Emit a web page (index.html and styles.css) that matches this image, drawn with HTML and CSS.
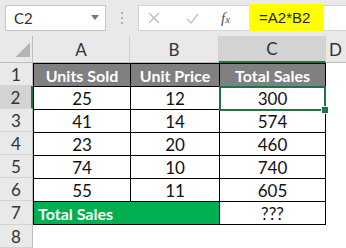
FILE: index.html
```html
<!DOCTYPE html>
<html lang="en">
<head>
  <meta charset="UTF-8">
  <meta name="viewport" content="width=device-width, initial-scale=1.0">
  <title>Total Sales</title>
  <link rel="stylesheet" href="styles.css">
</head>
<body>
  <div class="bar">
    <div class="namebox">
      <span>C2</span>
      <svg class="caret" width="8" height="5" viewBox="0 0 8 5"><path d="M0 0h8L4 5z" fill="#777"/></svg>
    </div>
    <div class="grip"><i></i><i></i><i></i></div>
    <div class="formula">
      <svg class="tool" width="12" height="12" viewBox="0 0 12 12"><path d="M1 1l10 10M11 1L1 11" stroke="#bbb" stroke-width="1.3"/></svg>
      <svg class="tool" width="13" height="11" viewBox="0 0 13 11"><path d="M1 6l4 4 7-9" stroke="#c4c4c4" stroke-width="1.4" fill="none"/></svg>
      <span class="fx">f<small>x</small></span>
      <span class="value">=A2*B2</span>
    </div>
  </div>

  <div class="sheet">
    <div class="hd corner"><b></b></div>
    <div class="hd col">A</div>
    <div class="hd col">B</div>
    <div class="hd col sel">C</div>
    <div class="hd col last">D</div>

    <div class="hd row">1</div>
    <div class="c top">Units Sold</div>
    <div class="c top">Unit Price</div>
    <div class="c top r">Total Sales</div>
    <div class="gap"></div>

    <div class="hd row sel">2</div>
    <div class="c">25</div>
    <div class="c">12</div>
    <div class="c r active">300</div>
    <div class="gap"></div>

    <div class="hd row">3</div>
    <div class="c">41</div>
    <div class="c">14</div>
    <div class="c r">574</div>
    <div class="gap"></div>

    <div class="hd row">4</div>
    <div class="c">23</div>
    <div class="c">20</div>
    <div class="c r">460</div>
    <div class="gap"></div>

    <div class="hd row">5</div>
    <div class="c">74</div>
    <div class="c">10</div>
    <div class="c r">740</div>
    <div class="gap"></div>

    <div class="hd row">6</div>
    <div class="c">55</div>
    <div class="c">11</div>
    <div class="c r">605</div>
    <div class="gap"></div>

    <div class="hd row">7</div>
    <div class="c b total">Total Sales</div>
    <div class="c b r">???</div>
    <div class="gap"></div>

    <div class="hd row">8</div>
    <div class="gap"></div>
    <div class="gap"></div>
    <div class="gap"></div>
    <div class="gap"></div>
  </div>
</body>
</html>
```

FILE: styles.css
```css
*{box-sizing:border-box}
body{margin:0;width:346px;height:248px;overflow:hidden;background:#fff;font-family:Lato,"Liberation Sans",sans-serif;color:#222}

/* name box + formula bar */
.bar{height:36px;background:#e9e9e9;display:flex;align-items:flex-start;padding:5px 0 0 5px}
.namebox{width:101px;height:26px;background:#fff;border:1px solid #c6c6c6;display:flex;align-items:center;justify-content:space-between;padding:0 6px 0 8px;font-size:15px;color:#333}
.caret{margin-top:-2px}
.grip{width:32px;height:26px;display:flex;flex-direction:column;align-items:center;justify-content:center;gap:3px}
.grip i{width:2px;height:2px;background:#b0b0b0}
.formula{flex:1;height:26px;background:#fff;border:1px solid #d4d4d4;border-right:none;display:flex;align-items:center;padding-left:9px}
.tool{margin-right:26px}
.tool+.tool{margin-right:22px}
.fx{font-family:"Liberation Serif",serif;font-style:italic;font-size:15px;color:#555;margin-right:19px}
.fx small{font-size:11px}
.value{background:#ffff00;height:27px;margin-top:-2px;width:75px;padding-left:10px;display:flex;align-items:center;font-family:"Liberation Sans",sans-serif;font-size:15px;color:#222}

/* worksheet grid */
.sheet{display:grid;grid-template-columns:33px 97px 89px 107px 1fr;grid-template-rows:27px repeat(6,23px) 24px 1fr;height:212px}
.hd{background:#e9e9e9;color:#333;display:flex;align-items:center;justify-content:center;font-size:17px}
.col{border-right:1px solid #cfcfcf;border-bottom:1px solid #bdbdbd}
.col.last{border-right:none;justify-content:flex-start;padding-left:3px}
.col.sel{background:#d3d3d3;border-bottom:2px solid #217346}
.corner{border-right:1px solid #bdbdbd;border-bottom:1px solid #bdbdbd;align-items:flex-end;justify-content:flex-end;padding:0 2px 5px 0}
.corner b{width:14px;height:14px;background:linear-gradient(135deg,transparent 50%,#b4b4b4 50%)}
.row{border-right:1px solid #bdbdbd;border-bottom:1px solid #d4d4d4}
.row.sel{background:#d3d3d3;border-right:2px solid #217346}

.c{border-left:1px solid #000;border-top:1px solid #000;display:flex;align-items:center;justify-content:center;font-size:17px;color:#111}
.c.r{border-right:1px solid #000}
.c.b{border-bottom:1px solid #000}
.c.top{background:#808080;color:#fff;font-weight:700;font-size:16px}
.c.total{grid-column:span 2;background:#00b050;color:#fff;font-weight:700;font-size:16px;justify-content:flex-start;padding-left:4px}

/* active cell frame and fill handle */
.active{position:relative}
.active::before{content:"";position:absolute;left:-1px;top:-1px;right:-1px;bottom:-2px;border:2px solid #217346}
.active::after{content:"";position:absolute;right:-4px;bottom:-5px;width:6px;height:6px;background:#217346;border:1px solid #fff}
```
